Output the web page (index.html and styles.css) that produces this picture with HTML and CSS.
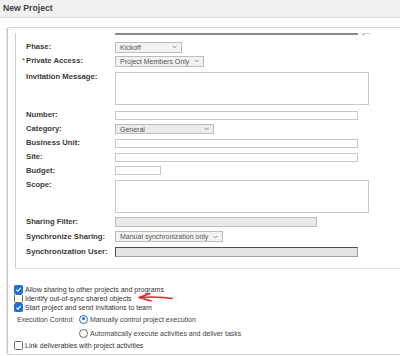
FILE: index.html
```html
<!DOCTYPE html>
<html lang="en">
<head>
    <meta charset="UTF-8">
    <meta name="viewport" content="width=device-width, initial-scale=1.0">
    <title>New Project</title>
    <link rel="stylesheet" href="styles.css">
</head>
<body>
    <header class="dialog-header">New Project</header>

    <main class="dialog-panel">
        <!-- Прокручиваемая часть формы -->
        <div class="form-scroll">
            <div class="form-fields">
                <div class="form-row row-owner">
                    <label class="field-label">Owner:</label>
                    <span class="owner-input">Moberg</span>
                    <svg class="picker-icon" viewBox="0 0 8 4"><path d="M0 3 L3 1.5 M4 1 L8 1"/></svg>
                </div>
                <div class="form-row">
                    <label class="field-label">Phase:</label>
                    <span class="select select-phase"><span>Kickoff</span><svg class="chevron" viewBox="0 0 6 4"><path d="M0.6 0.6 L3 3 L5.4 0.6"/></svg></span>
                </div>
                <div class="form-row">
                    <label class="field-label"><span class="required">*</span>Private Access:</label>
                    <span class="select select-access"><span>Project Members Only</span><svg class="chevron" viewBox="0 0 6 4"><path d="M0.6 0.6 L3 3 L5.4 0.6"/></svg></span>
                </div>
                <div class="form-row row-area">
                    <label class="field-label">Invitation Message:</label>
                    <textarea class="text-area"></textarea>
                </div>
                <div class="form-row">
                    <label class="field-label">Number:</label>
                    <input class="text-input" type="text">
                </div>
                <div class="form-row">
                    <label class="field-label">Category:</label>
                    <span class="select select-category"><span>General</span><svg class="chevron" viewBox="0 0 6 4"><path d="M0.6 0.6 L3 3 L5.4 0.6"/></svg></span>
                </div>
                <div class="form-row">
                    <label class="field-label">Business Unit:</label>
                    <input class="text-input" type="text">
                </div>
                <div class="form-row">
                    <label class="field-label">Site:</label>
                    <input class="text-input" type="text">
                </div>
                <div class="form-row row-short">
                    <label class="field-label">Budget:</label>
                    <input class="text-input input-budget" type="text">
                </div>
                <div class="form-row row-area row-scope">
                    <label class="field-label">Scope:</label>
                    <textarea class="text-area"></textarea>
                </div>
                <div class="form-row">
                    <label class="field-label">Sharing Filter:</label>
                    <span class="select select-filter"></span>
                </div>
                <div class="form-row row-tall">
                    <label class="field-label">Synchronize Sharing:</label>
                    <span class="select select-sync"><span>Manual synchronization only</span><svg class="chevron" viewBox="0 0 6 4"><path d="M0.6 0.6 L3 3 L5.4 0.6"/></svg></span>
                </div>
                <div class="form-row row-tall">
                    <label class="field-label">Synchronization User:</label>
                    <span class="sync-user"></span>
                </div>
            </div>
        </div>

        <!-- Опции проекта -->
        <section class="options">
            <label class="check-row"><span class="checkbox is-checked"><svg viewBox="0 0 10 10"><path d="M2 5.2 L4.2 7.3 L8.2 2.6"/></svg></span>Allow sharing to other projects and programs</label>
            <label class="check-row row-marked"><span class="checkbox"></span>Identify out-of-sync shared objects
                <svg class="annotation-arrow" viewBox="0 0 40 14"><path d="M36 9.5 Q22 7 3 8.5 M3 8.5 L14 4.5 M3 8.5 L15 12"/></svg>
            </label>
            <label class="check-row"><span class="checkbox is-checked"><svg viewBox="0 0 10 10"><path d="M2 5.2 L4.2 7.3 L8.2 2.6"/></svg></span>Start project and send invitations to team</label>
            <div class="radio-row">
                <span class="radio-caption">Execution Control:</span>
                <span class="radio is-checked"></span>Manually control project execution
            </div>
            <div class="radio-row radio-indent">
                <span class="radio"></span>Automatically execute activities and deliver tasks
            </div>
            <label class="check-row row-link"><span class="checkbox"></span>Link deliverables with project activities</label>
        </section>
    </main>
</body>
</html>
```

FILE: styles.css
```css
* {
    margin: 0;
    padding: 0;
    box-sizing: border-box;
}

body {
    font-family: 'Liberation Sans', Arial, sans-serif;
    background: #ffffff;
    color: #333333;
    width: 400px;
    height: 356px;
    overflow: hidden;
}

.dialog-header {
    height: 18px;
    background: #f0f0f0;
    border-bottom: 1px solid #dcdcdc;
    padding-left: 3px;
    font-size: 8.7px;
    font-weight: 700;
    line-height: 16px;
    color: #444444;
}

.dialog-panel {
    margin: 9px 0 0 7px;
    width: 420px;
    height: 328px;
    border: 1px solid #d4d4d4;
    border-left-color: #c4c4c4;
    border-radius: 3px 0 0 3px;
    box-shadow: -1px 0 0 #e6e6e6;
}

.form-scroll {
    margin: 5px 0 0 7px;
    height: 236px;
    border-left: 1px solid #cfcfcf;
    border-bottom: 1px solid #e2e2e2;
    overflow: hidden;
}

.form-fields {
    margin-top: -7px;
    padding-left: 10px;
}

.form-row {
    display: flex;
    align-items: center;
    height: 14px;
}

.row-short {
    height: 13px;
}

.row-tall {
    height: 15px;
}

.row-owner {
    align-items: flex-start;
}

.row-area {
    align-items: flex-start;
    height: 40px;
    padding-top: 4px;
}

.row-scope {
    height: 38px;
    padding-top: 3px;
}

.field-label {
    width: 89px;
    flex-shrink: 0;
    font-size: 7.7px;
    font-weight: 700;
    line-height: 10px;
    color: #3a3a3a;
    position: relative;
}

.required {
    position: absolute;
    left: -4px;
    top: 0;
    font-weight: 400;
    color: #555555;
}

.owner-input {
    margin-top: -1px;
    width: 243px;
    height: 10px;
    background: #e9e9e9;
    border: 1px solid #a8a8a8;
    border-bottom: 2px solid #8a8a8a;
    border-right-color: #8a8a8a;
    font-size: 7px;
    line-height: 4px;
    color: #666666;
    padding-left: 3px;
    overflow: hidden;
}

.picker-icon {
    width: 8px;
    height: 4px;
    margin: 6px 0 0 4px;
    fill: none;
    stroke: #7f95b0;
    stroke-width: 1;
}

.select {
    display: inline-flex;
    align-items: center;
    justify-content: space-between;
    height: 11px;
    padding: 0 4px 0 4px;
    background: #f2f2f2;
    border: 1px solid #bdbdbd;
    font-size: 7px;
    color: #555555;
    white-space: nowrap;
}

.chevron {
    width: 5px;
    height: 4px;
    fill: none;
    stroke: #666666;
    stroke-width: 0.9;
}

.select-phase {
    width: 67px;
}

.select-access {
    width: 89px;
}

.select-category {
    width: 99px;
    height: 10px;
    background: #ebebeb;
}

.select-filter {
    width: 202px;
    height: 10px;
    background: #e8e8e8;
}

.select-sync {
    width: 108px;
}

.text-input {
    width: 243px;
    height: 9px;
    border: 1px solid #c8c8c8;
    background: #ffffff;
    outline: none;
}

.input-budget {
    width: 46px;
}

.text-area {
    width: 254px;
    height: 33px;
    border: 1px solid #c8c8c8;
    resize: none;
    outline: none;
}

.sync-user {
    width: 243px;
    height: 10px;
    background: #e4e4e4;
    border: 1px solid #a0a0a0;
    border-top-color: #4a4a4a;
    border-left-color: #4a4a4a;
}

.options {
    padding: 16px 0 0 6px;
    font-size: 7px;
    color: #333333;
}

.check-row {
    display: flex;
    align-items: center;
    height: 9px;
    white-space: nowrap;
}

.row-marked {
    position: relative;
}

.checkbox {
    width: 9px;
    height: 9px;
    margin-right: 2px;
    border: 1px solid #6a6a6a;
    border-radius: 1.5px;
    background: #ffffff;
    flex-shrink: 0;
}

.checkbox.is-checked {
    background: #1b6fd8;
    border-color: #1b6fd8;
}

.checkbox svg {
    display: block;
    width: 7px;
    height: 7px;
    fill: none;
    stroke: #ffffff;
    stroke-width: 1.6;
}

.annotation-arrow {
    position: absolute;
    left: 122px;
    top: -5px;
    width: 40px;
    height: 14px;
    fill: none;
    stroke: #e0262b;
    stroke-width: 1.6;
    stroke-linecap: round;
}

.radio-row {
    display: flex;
    align-items: center;
    height: 14px;
    white-space: nowrap;
    color: #444444;
}

.radio-caption {
    width: 62px;
    margin-left: 3px;
    flex-shrink: 0;
}

.radio-indent {
    padding-left: 65px;
}

.radio {
    width: 9px;
    height: 9px;
    margin-right: 2px;
    border: 1px solid #6a6a6a;
    border-radius: 50%;
    flex-shrink: 0;
    position: relative;
}

.radio.is-checked {
    border: 1.5px solid #1b6fd8;
}

.radio.is-checked::after {
    content: '';
    position: absolute;
    left: 1.5px;
    top: 1.5px;
    width: 3px;
    height: 3px;
    border-radius: 50%;
    background: #1b6fd8;
}

.row-link {
    margin-top: 1px;
}
```
